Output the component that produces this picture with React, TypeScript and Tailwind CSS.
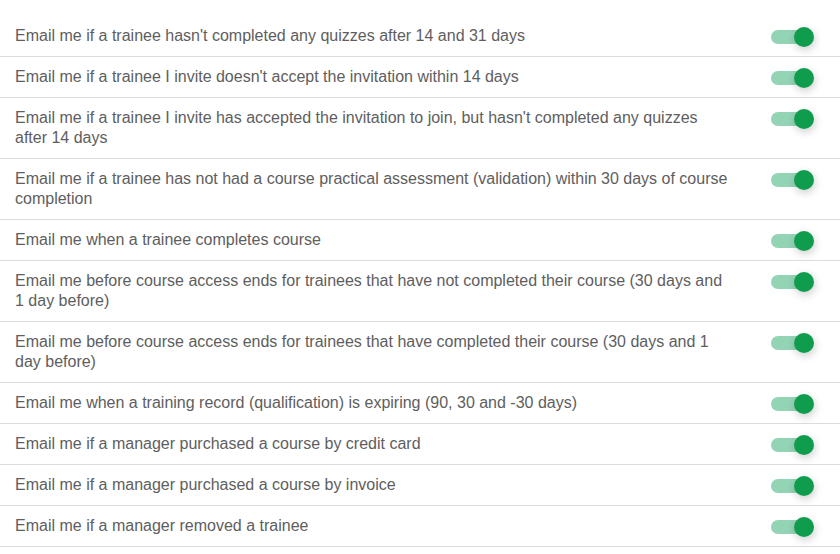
const items = [
  "Email me if a trainee hasn't completed any quizzes after 14 and 31 days",
  "Email me if a trainee I invite doesn't accept the invitation within 14 days",
  "Email me if a trainee I invite has accepted the invitation to join, but hasn't completed any quizzes after 14 days",
  "Email me if a trainee has not had a course practical assessment (validation) within 30 days of course completion",
  "Email me when a trainee completes course",
  "Email me before course access ends for trainees that have not completed their course (30 days and 1 day before)",
  "Email me before course access ends for trainees that have completed their course (30 days and 1 day before)",
  "Email me when a training record (qualification) is expiring (90, 30 and -30 days)",
  "Email me if a manager purchased a course by credit card",
  "Email me if a manager purchased a course by invoice",
  "Email me if a manager removed a trainee",
];

function Toggle() {
  return (
    <div className="relative h-[20px] w-[44px] shrink-0">
      <div className="absolute left-[1px] top-[4px] h-[14px] w-[37px] rounded-full bg-[#93d4b5]" />
      <div className="absolute right-0 top-[1px] h-[20px] w-[20px] rounded-full bg-[#0f9d4d] shadow-[1px_3px_8px_rgba(0,0,0,0.2)]" />
    </div>
  );
}

export default function App() {
  return (
    <div
      className="min-h-[554px] w-[840px] bg-white pt-[16px]"
      style={{ fontFamily: '"Liberation Sans", Arial, sans-serif' }}
    >
      {items.map((text) => (
        <div
          key={text}
          className="flex items-start justify-between border-b border-[#dcdcdc] py-[10px] pl-[15px] pr-[26px]"
        >
          <p className="w-[716px] text-[16px] leading-[20px] text-[#5e5e5e]">{text}</p>
          <Toggle />
        </div>
      ))}
    </div>
  );
}
